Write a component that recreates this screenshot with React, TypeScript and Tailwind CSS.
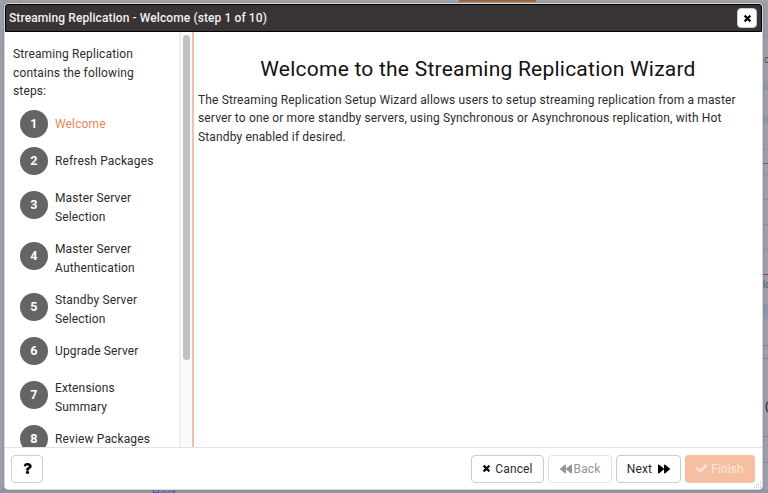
import React from "react";
import { FaTimes, FaCheck, FaForward, FaBackward, FaQuestion } from "react-icons/fa";

const steps = [
  ["Welcome"],
  ["Refresh Packages"],
  ["Master Server", "Selection"],
  ["Master Server", "Authentication"],
  ["Standby Server", "Selection"],
  ["Upgrade Server"],
  ["Extensions", "Summary"],
  ["Review Packages"],
];

function Backdrop() {
  return (
    <div className="flex h-full flex-col bg-[#9b9fa8]">
      <div className="flex h-[3px] shrink-0 bg-[#a3a3a5]">
        <div className="ml-[20px] w-px bg-[#93959d]" />
        <div className="ml-[438px] h-[2px] w-[77px] bg-[#a0673f]" />
      </div>
      <div className="flex min-h-0 flex-1 justify-end">
        <div className="flex w-[5px] flex-col overflow-hidden bg-[#9c9fa7] text-[10px] leading-[10px] text-[#4c4f57]">
          <div className="h-[34px] border-b border-[#8f939d] bg-[#999ca3]" />
          <div className="mt-[18px] h-[10px] pl-px">c</div>
          <div className="mt-[16px] h-[9px] bg-[#8e95a6]" />
          <div className="mt-[25px] h-[9px] bg-[#8e95a6]" />
          <div className="mt-[25px] h-px bg-[#8b909c]" />
          <div className="mt-[13px] h-px bg-[#5d606c]" />
          <div className="mt-[10px] h-px bg-[#8b909c]" />
          <div className="mt-[24px] h-px bg-[#8b909c]" />
          <div className="mt-[24px] h-px bg-[#8b909c]" />
          <div className="mt-[24px] h-px bg-[#8b909c]" />
          <div className="mt-[24px] h-px shrink-0 bg-[#a13c50]" />
          <div className="mt-[5px] h-[10px] shrink-0">lo</div>
          <div className="mt-[14px] h-[15px] shrink-0 bg-[#8e95a6]" />
          <div className="mt-[26px] h-px shrink-0 bg-[#7f8594]" />
          <div className="mt-[12px] h-px shrink-0 bg-[#7f8594]" />
          <div className="mt-[43px] h-[10px] shrink-0 pl-[2px] font-bold text-[#222]">(</div>
          <div className="mt-[24px] h-px shrink-0 bg-[#7f8594]" />
          <div className="mt-[25px] h-px shrink-0 bg-[#7f8594]" />
        </div>
      </div>
      <div className="h-[4px] shrink-0 overflow-hidden bg-[#9295a1] pl-[152px] text-[11px] leading-[9px] text-[#4951b1]">Host</div>
    </div>
  );
}

function WizardDialog() {
  return (
    <div className="absolute top-[3px] left-[4px] flex h-[487px] w-[759px] flex-col rounded-[4px] border border-[#d5d7db] bg-white shadow-[0_0_2px_#777b86]">
      <div className="flex h-[28px] shrink-0 items-center justify-between rounded-t-[3px] border border-black bg-[#383334] pr-[4px] pl-[3px] text-[#f0f0f0]">
        <span className="text-[12px] font-medium tracking-[0.1px]">Streaming Replication - Welcome (step 1 of 10)</span>
        <button className="flex h-[20px] w-[20px] items-center justify-center rounded-[4px] border border-[#c2cad5] bg-white text-black">
          <FaTimes className="h-[9px] w-[9px]" stroke="currentColor" strokeWidth="55" />
        </button>
      </div>
      <div className="flex min-h-0 flex-1">
        <div className="flex w-[189px] shrink-0 overflow-hidden border-r-2 border-[#f0bfb3]">
          <div className="w-[174px] shrink-0 overflow-hidden pt-[13px] pl-[8px]">
            <p className="w-[140px] leading-[18.5px]">Streaming Replication contains the following steps:</p>
            <ol className="mt-[5px] pl-[7px]">
              {steps.map((lines, i) => (
                <li key={i} className={lines.length > 1 ? "flex h-[51px] items-center" : "flex h-[37px] items-center"}>
                  <span className="flex h-[28px] w-[28px] shrink-0 items-center justify-center rounded-full bg-[#646464] text-[12.5px] font-bold text-white">{i + 1}</span>
                  <span className={i === 0 ? "ml-[7px] leading-[18.4px] text-[#ed8556]" : lines.length > 1 ? "ml-[7px] pt-[5px] leading-[18.4px]" : "ml-[7px] leading-[18.4px]"}>
                    {lines.map((line) => (
                      <span key={line} className="block whitespace-nowrap">{line}</span>
                    ))}
                  </span>
                </li>
              ))}
            </ol>
          </div>
          <div className="flex flex-1 justify-center border-l-2 border-[#eeeeee] bg-[#fafafa] pt-[3px]">
            <div className="h-[325px] w-[7px] rounded-full bg-[#c1c1c1]" />
          </div>
        </div>
        <div className="flex-1 pt-[23px] pl-[4px]">
          <h1 className="pr-[4px] text-center text-[21px] leading-[28px] font-normal tracking-[0.23px] text-[#111111]">Welcome to the Streaming Replication Wizard</h1>
          <p className="mt-[8px] whitespace-nowrap leading-[18.4px]">
            The Streaming Replication Setup Wizard allows users to setup streaming replication from a master<br />
            server to one or more standby servers, using Synchronous or Asynchronous replication, with Hot<br />
            Standby enabled if desired.
          </p>
        </div>
      </div>
      <div className="relative flex h-[42px] shrink-0 items-center justify-between border-t border-[#e1e3e7] pr-[7px] pl-[6px]">
        <button className="flex h-[28px] w-[32px] items-center justify-center rounded-[4px] border border-[#cbd1dc] text-black">
          <FaQuestion className="h-[11px] w-[11px]" stroke="currentColor" strokeWidth="15" />
        </button>
        <div className="flex gap-[4px]">
          <button className="flex h-[28px] w-[73px] items-center justify-center gap-[4px] rounded-[4px] border border-[#c5ccd6]">
            <FaTimes className="h-[9px] w-[9px] text-black" stroke="currentColor" strokeWidth="55" />
            Cancel
          </button>
          <button className="flex h-[28px] w-[64px] items-center justify-center gap-[2px] rounded-[4px] border border-[#e0e3e8] text-[#969696]">
            <FaBackward className="h-[12px] w-[12px]" />
            Back
          </button>
          <button className="flex h-[28px] w-[65px] items-center justify-center gap-[6px] rounded-[4px] border border-[#c5ccd6]">
            Next
            <FaForward className="h-[12px] w-[12px] text-black" />
          </button>
          <button className="flex h-[28px] w-[70px] items-center justify-center gap-[4px] rounded-[4px] bg-[#f7bfa2] text-[#fce7dc]">
            <FaCheck className="h-[11px] w-[11px]" />
            Finish
          </button>
        </div>
        <svg className="absolute right-0 bottom-0 h-[9px] w-[9px]" viewBox="0 0 9 9" fill="#c5c5c5">
          <path d="M7 1h1v1H7zM5 3h1v1H5zM7 3h1v1H7zM3 5h1v1H3zM5 5h1v1H5zM7 5h1v1H7zM1 7h1v1H1zM3 7h1v1H3zM5 7h1v1H5zM7 7h1v1H7z" />
        </svg>
      </div>
    </div>
  );
}

export default function App() {
  return (
    <div className="relative h-[493px] w-[768px] overflow-hidden font-[Roboto,sans-serif] text-[12px] tracking-[0.14px] text-[#2c2c2c]">
      <Backdrop />
      <WizardDialog />
    </div>
  );
}
